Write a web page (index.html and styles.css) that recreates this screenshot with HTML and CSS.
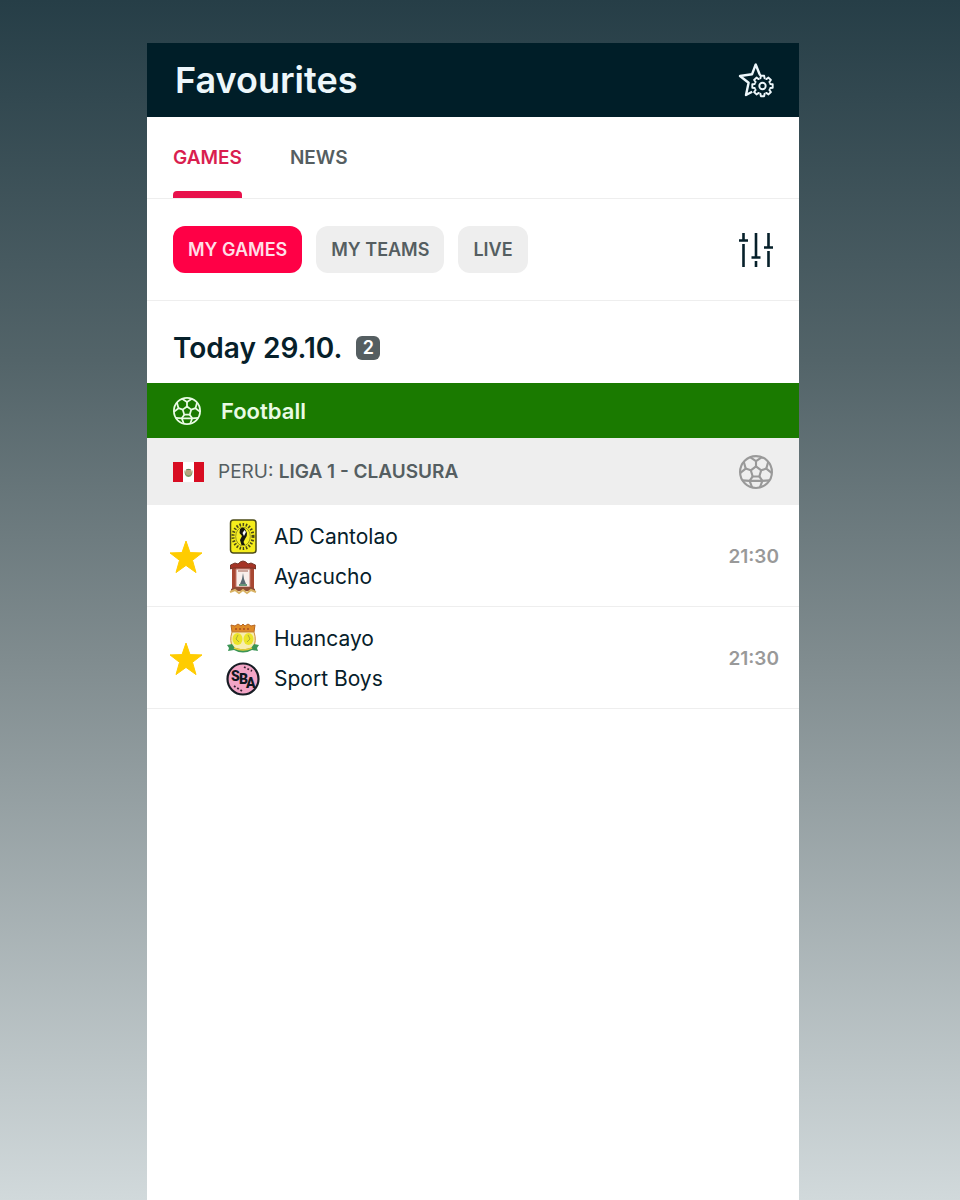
FILE: index.html
```html
<!DOCTYPE html>
<html lang="en">

<head>
    <meta charset="utf-8">
    <meta name="viewport" content="width=device-width, initial-scale=1">
    <title>Favourites</title>
    <link rel="stylesheet" href="styles.css">
</head>

<body>
    <!-- shared icons -->
    <svg class="sprite" aria-hidden="true">
        <symbol id="ball" viewBox="0 0 32 32">
            <g fill="none" stroke="currentColor" stroke-width="2" stroke-linejoin="round">
                <circle cx="16" cy="16" r="15" />
                <path d="M16 10.8L20.9 14.4L19.1 20.2H12.9L11.1 14.4Z" />
                <path d="M16 10.8V5.8M20.9 14.4L25.7 12.8M19.1 20.2L22 24.3M12.9 20.2L10 24.3M11.1 14.4L6.3 12.8" />
                <path d="M10.4 2.1L16 5.8L21.6 2.1M27.5 6.4L25.7 12.8L31 17M28.7 23.9L22 24.3L19.6 30.6M12.4 30.6L10 24.3L3.3 23.9M1 17L6.3 12.8L4.5 6.4M10 24.3H22" />
            </g>
        </symbol>
        <symbol id="star" viewBox="0 0 34 34">
            <path d="M17 1L21 12.6L33 12.9L23.5 20.3L27 32.6L17 25.4L7 32.6L10.5 20.3L1 12.9L13 12.6Z" fill="#fc0" stroke="#fc0" stroke-linejoin="round" />
        </symbol>
    </svg>

    <main class="app">
        <header class="topbar">
            <h1>Favourites</h1>
            <button class="icon-btn" aria-label="Manage favourites">
                <svg width="36" height="36" viewBox="0 0 36 36" fill="none" stroke="#edf7fb" stroke-linejoin="round">
                    <path stroke-width="2.4" d="M22.3 13.5L21.3 11.5L17.7 2.5L14 12.3L2 14L10.6 20.8L8 33L14.2 29.8" />
                    <g stroke-width="1.9" transform="translate(24.5 24)">
                        <path id="tooth" d="M-3 -7.4L-2 -7.8L-1.7 -10.2H1.7L2 -7.8L3 -7.4" />
                        <use href="#tooth" transform="rotate(45)" />
                        <use href="#tooth" transform="rotate(90)" />
                        <use href="#tooth" transform="rotate(135)" />
                        <use href="#tooth" transform="rotate(180)" />
                        <use href="#tooth" transform="rotate(225)" />
                        <use href="#tooth" transform="rotate(270)" />
                        <use href="#tooth" transform="rotate(315)" />
                        <circle r="3.2" />
                    </g>
                </svg>
            </button>
        </header>

        <nav class="tabs">
            <a href="#games" class="tab active">GAMES</a>
            <a href="#news" class="tab">NEWS</a>
        </nav>

        <div class="filters">
            <button class="chip selected">MY GAMES</button>
            <button class="chip">MY TEAMS</button>
            <button class="chip">LIVE</button>
            <button class="icon-btn push" aria-label="Filter settings">
                <svg width="36" height="36" viewBox="0 0 36 36" fill="none" stroke="#06202a" stroke-width="2.6">
                    <path d="M5.5 1V8.5M1 8.5H10M5.5 12V35" />
                    <path d="M18 1V25.5M13.5 25.5H22.5M18 29V35" />
                    <path d="M30.5 1V15.5M26 15.5H35M30.5 19V35" />
                </svg>
            </button>
        </div>

        <div class="day">
            <h2>Today 29.10.</h2>
            <span class="count">2</span>
        </div>

        <div class="sport">
            <svg width="28" height="28"><use href="#ball" /></svg>
            <h3>Football</h3>
        </div>

        <div class="league">
            <svg width="31" height="20" viewBox="0 0 31 20">
                <rect width="31" height="20" fill="#fff" />
                <path d="M0 0H10V20H0ZM21 0H31V20H21Z" fill="#d80d22" />
                <path d="M11.500 8Q11 15 15.500 15T19.500 8L17.500 12H13.500Z" fill="#7d9a68" />
                <circle cx="15.500" cy="10" r="3.200" fill="#b5a57f" />
                <path d="M13.500 7.500H17.500" stroke="#5b8a62" />
            </svg>
            <p>PERU: <b>LIGA 1 - CLAUSURA</b></p>
            <svg class="push grey" width="34" height="34"><use href="#ball" /></svg>
        </div>

        <ul class="matches">
            <li class="match">
                <button class="icon-btn" aria-label="Remove AD Cantolao - Ayacucho from favourites">
                    <svg width="34" height="34"><use href="#star" /></svg>
                </button>
                <div class="teams">
                    <div class="team">
                        <svg width="34" height="36" viewBox="0 0 34 36">
                            <rect x="4.500" y="1" width="25.500" height="33" rx="3" fill="#f5ed1c" stroke="#4c4b16" stroke-width="1.500" />
                            <ellipse cx="17" cy="17.500" rx="10" ry="12" fill="none" stroke="#49481a" stroke-width="3" stroke-dasharray="1.500 1.700" />
                            <ellipse cx="17" cy="17.500" rx="7.300" ry="9.300" fill="#f7ef27" stroke="#77741c" stroke-width=".7" />
                            <path d="M14 10Q17 7 19 10L21 14Q21.500 17 19 20L17.500 23L19 26L15.500 26L14 21L16 17L13.500 14Z" fill="#15170f" />
                            <path d="M18.500 11L20 13L18 17L16.500 14Z" fill="#fff" />
                        </svg>
                        <span>AD Cantolao</span>
                    </div>
                    <div class="team">
                        <svg width="34" height="36" viewBox="0 0 34 36">
                            <path d="M6 9H28V30H6Z" fill="#a74732" />
                            <path d="M4.500 10V6L9 4L12 5Q17 -1 22 5L25 4L29.500 6V10L27 9H7Z" fill="#a63425" stroke="#75372a" />
                            <path d="M10 10H24V28H10Z" fill="#f8efeb" stroke="#c4796b" />
                            <path d="M12 12H22" stroke="#bd8e82" stroke-width="1.500" />
                            <path d="M17 14L18 20L20 25H14L16 20Z" fill="#596a72" />
                            <path d="M13 26H21" stroke="#679779" stroke-width="2" />
                            <path d="M5 30L9 28H25L29 30V32H5Z" fill="#8d4b36" />
                            <path d="M4 33L9 31L13 34L17 31L21 34L25 31L30 33" fill="none" stroke="#d8b264" stroke-width="2" />
                        </svg>
                        <span>Ayacucho</span>
                    </div>
                </div>
                <time>21:30</time>
            </li>
            <li class="match">
                <button class="icon-btn" aria-label="Remove Huancayo - Sport Boys from favourites">
                    <svg width="34" height="34"><use href="#star" /></svg>
                </button>
                <div class="teams">
                    <div class="team">
                        <svg width="34" height="36" viewBox="0 0 34 36">
                            <path d="M5 4L9 5L12 3L15 5L17 3L19 5L22 3L25 5L29 4L28 11H6Z" fill="#df8b27" stroke="#b76724" />
                            <path d="M6 11H28Q31 20 27 27L17 29L7 27Q3 20 6 11Z" fill="#f7edb0" stroke="#cf8c3c" />
                            <ellipse cx="11.500" cy="18" rx="5" ry="6" fill="#ece429" />
                            <ellipse cx="22.500" cy="18" rx="5" ry="6" fill="#ece429" />
                            <path d="M12 14L10 18L13 21M22 14L24 18L21 21" fill="none" stroke="#a8ad36" />
                            <path d="M9 8H25" stroke="#b95c23" stroke-width="2" stroke-dasharray="2 2" />
                            <path d="M1 24L6 23L9 27Q17 30 25 27L28 23L33 24L31 27L32 30L26 29Q17 34 8 29L2 30L3 27Z" fill="#3b9555" />
                            <path d="M8 27Q17 31 26 27" fill="none" stroke="#e5ce37" stroke-width="1.500" />
                        </svg>
                        <span>Huancayo</span>
                    </div>
                    <div class="team">
                        <svg width="34" height="36" viewBox="0 0 34 36">
                            <circle cx="17" cy="18" r="15.500" fill="#f3a5c6" stroke="#171d25" stroke-width="2.200" />
                            <g class="sba">
                                <text x="5" y="20">S</text>
                                <text x="13" y="23">B</text>
                                <text x="20" y="27">A</text>
                            </g>
                            <path d="M18 6L26 10M8 25L16 30" stroke="#35202f" stroke-width="1.800" stroke-dasharray="1.800 2" />
                        </svg>
                        <span>Sport Boys</span>
                    </div>
                </div>
                <time>21:30</time>
            </li>
        </ul>
    </main>
</body>

</html>
```

FILE: styles.css
```css
* {
    box-sizing: border-box;
}

body {
    margin: 0;
    min-height: 100vh;
    display: flex;
    padding: 43px 161px 0 147px;
    background: linear-gradient(#263e47, #536469 30%, #808c8f 55%, #d1d9db);
    color: #06202a;
    font-family: Inter, "Liberation Sans", sans-serif;
    font-size: 21px;
}

h1,
h2,
h3,
p,
ul {
    margin: 0;
    padding: 0;
}

svg {
    display: block;
    flex: none;
}

button {
    border: 0;
    padding: 0;
    font: inherit;
    cursor: pointer;
}

.sprite {
    position: absolute;
    width: 0;
    height: 0;
}

.app {
    flex: 1;
    min-width: 0;
    background: #fff;
}

.icon-btn {
    background: none;
}

.push {
    margin-left: auto;
}

/* header */
.topbar {
    display: flex;
    align-items: center;
    justify-content: space-between;
    height: 74px;
    padding: 0 25px 0 28px;
    background: #001e28;
    color: #edf7fb;
}

h1 {
    font-size: 36px;
    font-weight: 600;
}

/* tabs */
.tabs {
    display: flex;
    gap: 48px;
    height: 82px;
    padding: 0 26px;
    border-bottom: 1px solid #eee;
}

.tab {
    display: flex;
    align-items: center;
    border-top: 6px solid transparent;
    border-bottom: 7px solid transparent;
    color: #555e61;
    font-size: 19px;
    font-weight: 600;
    text-decoration: none;
}

.tab.active {
    position: relative;
    color: #d91e4f;
}

.tab.active::after {
    content: "";
    position: absolute;
    left: 0;
    right: 0;
    bottom: -7px;
    height: 7px;
    border-radius: 4px 4px 0 0;
    background: #e8114b;
}

/* filter chips */
.filters {
    display: flex;
    align-items: center;
    gap: 14px;
    height: 102px;
    padding: 0 25px 0 26px;
    border-bottom: 1px solid #eee;
}

.chip {
    height: 47px;
    padding: 0 15px;
    border-radius: 12px;
    background: #eee;
    color: #555e61;
    font-size: 18px;
    font-weight: 600;
}

.chip.selected {
    background: #ff0046;
    color: #ffdfe7;
}

.day {
    display: flex;
    align-items: center;
    gap: 14px;
    height: 82px;
    padding: 12px 26px 0;
}

h2 {
    font-size: 28px;
    font-weight: 600;
}

.count {
    width: 24px;
    border-radius: 6px;
    background: #555e61;
    color: #fff;
    font-size: 18px;
    font-weight: 600;
    line-height: 24px;
    text-align: center;
}

.sport {
    display: flex;
    align-items: center;
    gap: 20px;
    height: 55px;
    padding: 0 26px;
    background: #1a7a00;
    color: #e9fbe4;
}

h3 {
    font-size: 22px;
    font-weight: 600;
}

.league {
    display: flex;
    align-items: center;
    gap: 14px;
    height: 67px;
    padding: 0 26px;
    background: #eee;
    color: #555e61;
    font-size: 19px;
}

.league b {
    font-weight: 600;
}

.grey {
    color: #999;
}

/* match list */
.matches {
    list-style: none;
}

.match {
    display: flex;
    align-items: center;
    gap: 23px;
    height: 102px;
    padding: 2px 20px 0 22px;
    border-bottom: 1px solid #eee;
}

.teams {
    display: grid;
    gap: 4px;
}

.team {
    display: flex;
    align-items: center;
    gap: 14px;
}

time {
    margin-left: auto;
    color: #999;
    font-size: 19px;
    font-weight: 600;
}

.sba {
    fill: #101820;
    font-family: Roboto, sans-serif;
    font-size: 14px;
    font-weight: 900;
}
```
